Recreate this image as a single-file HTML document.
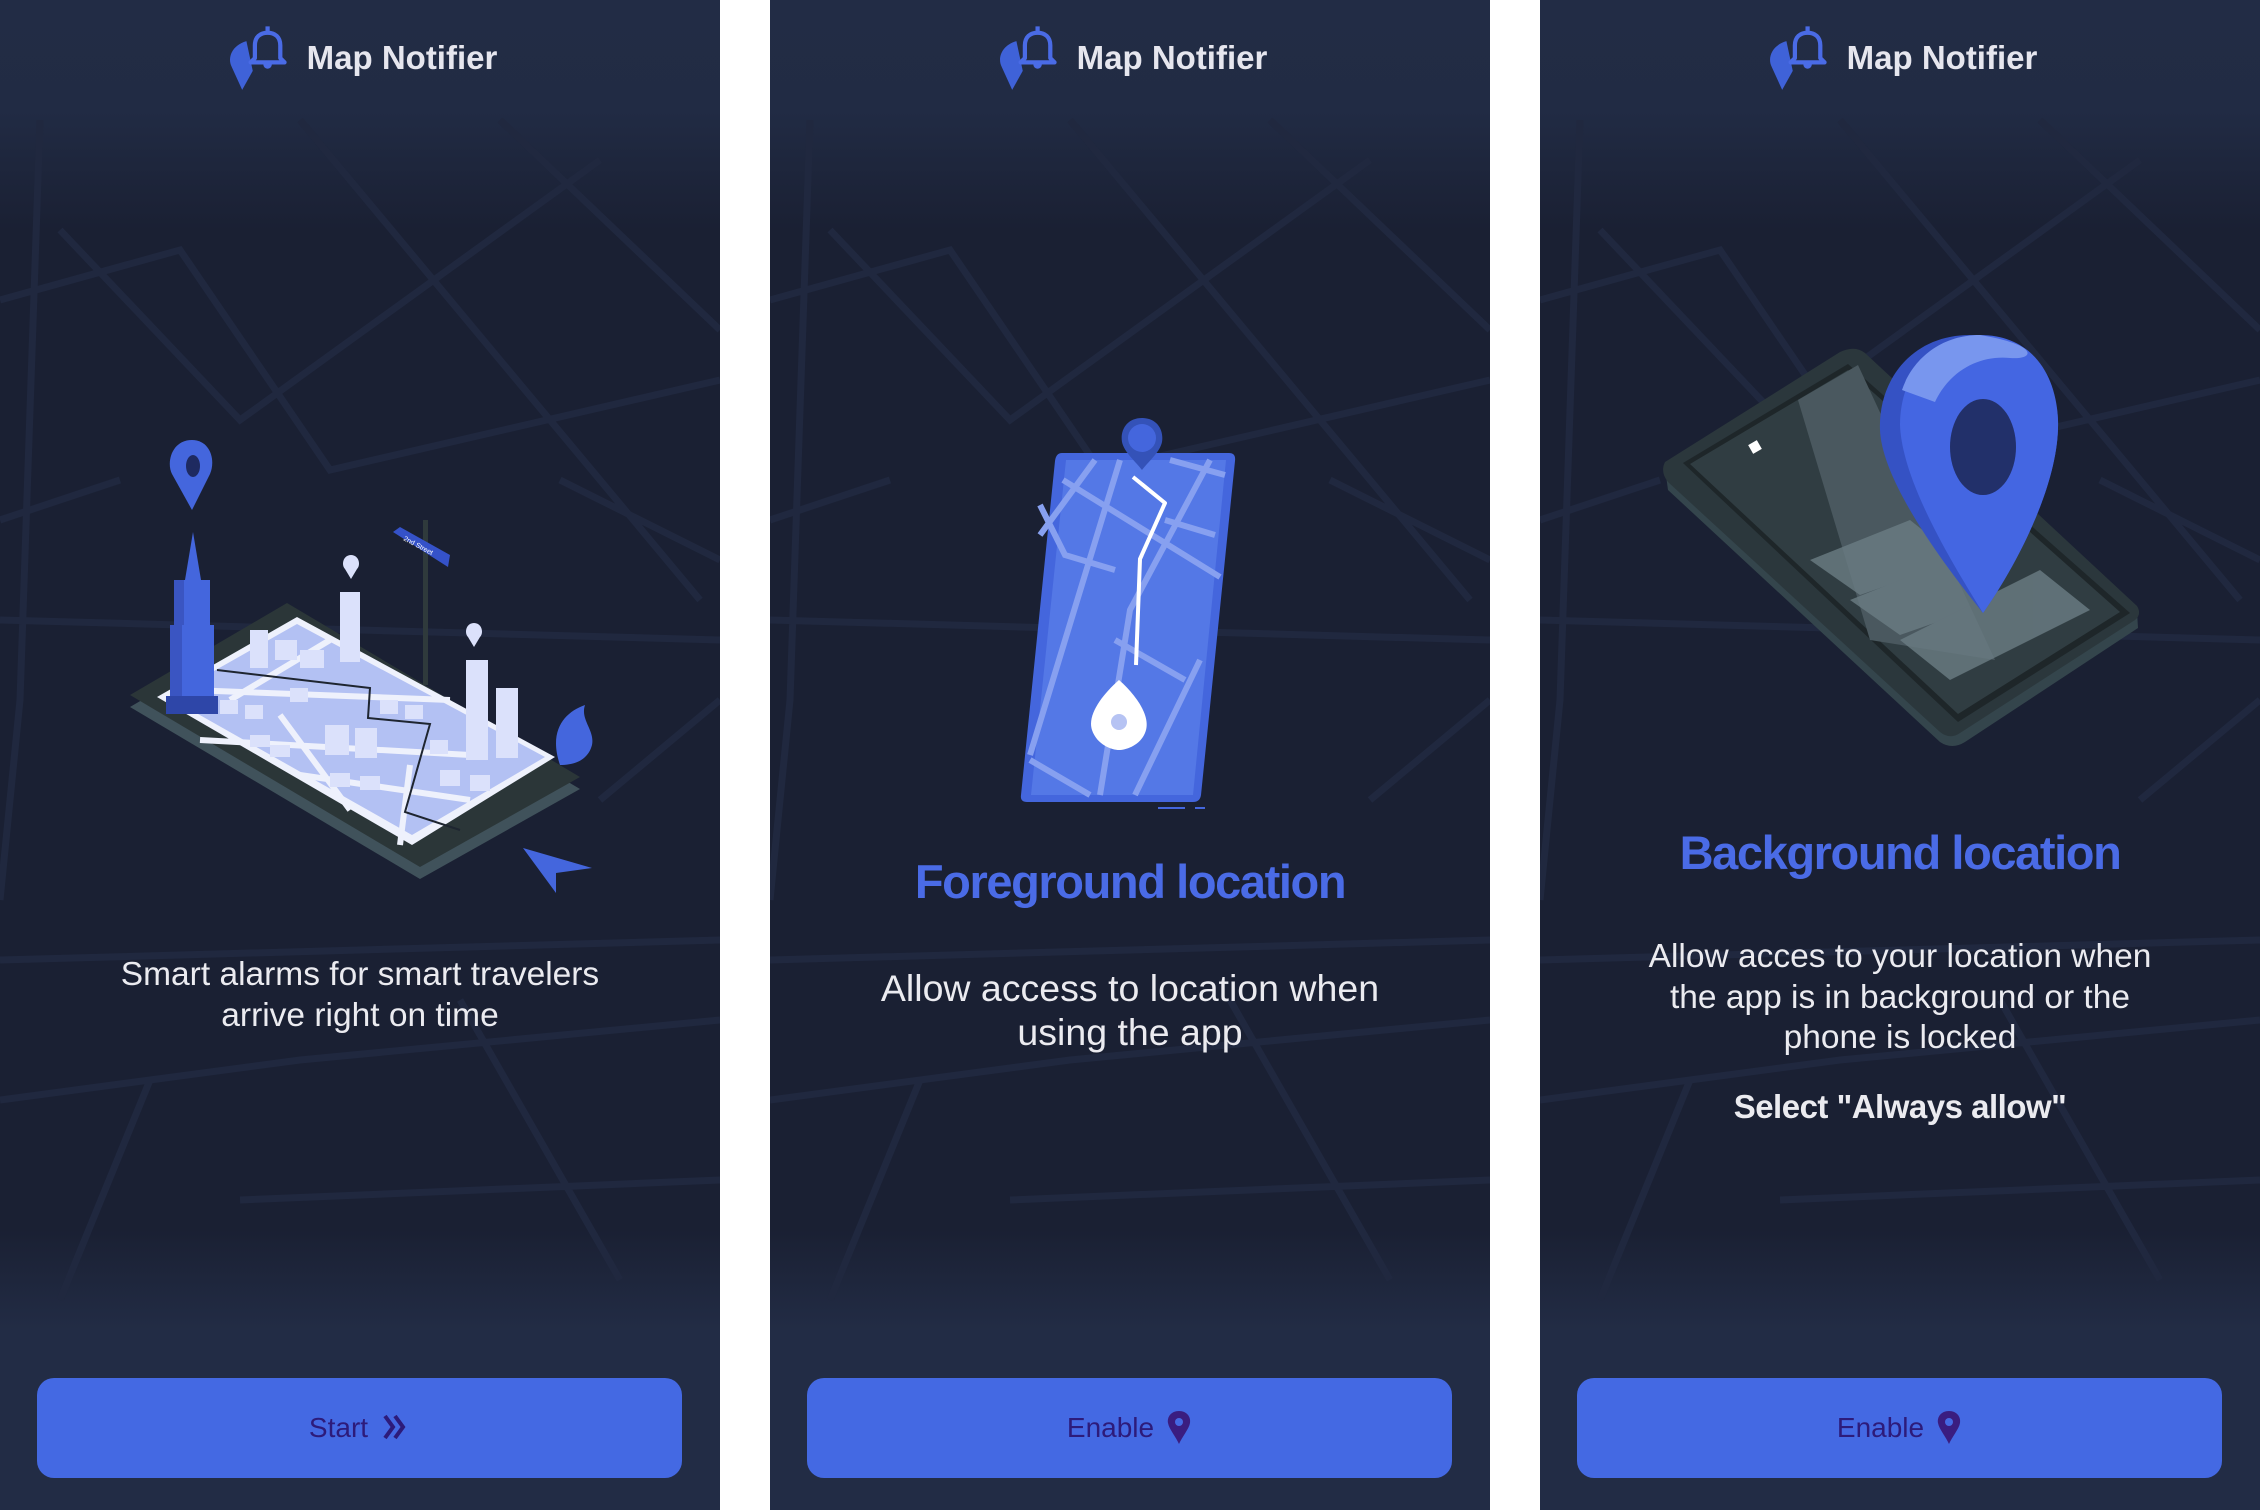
<!DOCTYPE html>
<html><head><meta charset="utf-8"><style>
*{margin:0;padding:0;box-sizing:border-box}
body{width:2260px;height:1510px;background:#fff;position:relative;overflow:hidden;font-family:"Liberation Sans",sans-serif}
.p{position:absolute;top:0;width:720px;height:1510px;overflow:hidden;background:linear-gradient(#222c45 0px,#212b44 110px,#1a2033 230px,#1a2033 1230px,#222c45 1330px,#222c45 1510px)}
.p svg.bg{position:absolute;left:0;top:0}
.hdr{position:absolute;left:0;width:720px;top:34px;height:48px;text-align:center;color:#e6e6ee;font-weight:bold;font-size:33px;line-height:48px}
.t{position:absolute;left:0;width:720px;text-align:center;color:#ebebf0}
.title{color:#4a6be6;font-weight:bold;font-size:47px;letter-spacing:-1.4px}
.btn{position:absolute;left:37px;width:645px;top:1378px;height:100px;border-radius:17px;background:#4469e3;color:#2d1b7a;font-size:28px;line-height:100px;text-align:center}
.btn svg{vertical-align:middle;margin-left:12px;position:relative;top:-3px}
</style></head><body>

<!-- PANEL 1 -->
<div class="p" style="left:0">
<svg class="bg" width="720" height="1510" fill="none" stroke="#20283f" stroke-width="7">
<path d="M60 230 L240 420 L600 160 M0 300 L180 250 L330 470 L720 380 M40 120 L20 700 L0 900 M300 120 L700 600 M500 120 L720 330 M0 960 L720 940 M0 1100 L300 1060 L720 1020 M150 1080 L60 1300 M460 1000 L620 1280 M600 800 L720 700 M0 520 L120 480 M560 480 L720 560 M0 620 L720 640 M240 1200 L720 1180"/>
</svg>
<div class="hdr"><svg width="66" height="72" viewBox="0 0 60 68" style="position:absolute;left:224px;top:-14px"><path d="M20 20 C6 24 2 36 6 44 L16 66 L26 48 Z" fill="#3f62d8"/><path d="M40 6 L40 11 M28 36 L28 24 C28 16 33 12 40 12 C47 12 52 16 52 24 L52 36 L56 40 L24 40 Z" fill="none" stroke="#4a6be6" stroke-width="4" stroke-linejoin="round"/><path d="M36 42 a4 4 0 0 0 8 0z" fill="#4a6be6"/></svg><span style="position:relative;left:42px">Map Notifier</span></div>
<svg class="bg" width="720" height="1510">
<polygon points="130,707 287,615 580,789 420,879" fill="#40525b"/>
<polygon points="130,695 287,603 580,777 420,867" fill="#2b3638"/>
<polygon points="157,697 297,617 555,757 412,845" fill="#eef1fc"/>
<polygon points="168,697 297,624 545,757 412,835" fill="#b3c1f3"/>
<g stroke="#eef1fc" stroke-width="6" fill="none"><path d="M190 690 L450 700 M230 700 L330 640 M200 740 L470 755 M280 715 L350 810 M410 765 L400 845 M300 775 L470 800"/></g>
<path d="M217 670 L370 688 L368 718 L430 724 L405 812 L460 830" stroke="#1e2530" stroke-width="2" fill="none"/>
<g fill="#dbe1fb"><rect x="250" y="630" width="18" height="38"/><rect x="275" y="640" width="22" height="20"/><rect x="300" y="650" width="24" height="18"/><rect x="340" y="592" width="20" height="70"/><rect x="466" y="660" width="22" height="100"/><rect x="496" y="688" width="22" height="70"/><rect x="325" y="725" width="24" height="30"/><rect x="355" y="728" width="22" height="30"/><rect x="220" y="700" width="18" height="14"/><rect x="245" y="705" width="18" height="14"/><rect x="290" y="688" width="18" height="14"/><rect x="380" y="700" width="18" height="14"/><rect x="405" y="705" width="18" height="14"/><rect x="430" y="740" width="18" height="14"/><rect x="440" y="770" width="20" height="16"/><rect x="470" y="775" width="20" height="16"/><rect x="330" y="773" width="20" height="14"/><rect x="360" y="776" width="20" height="14"/><rect x="250" y="735" width="20" height="12"/><rect x="270" y="745" width="20" height="12"/></g>
<rect x="423" y="520" width="5" height="165" fill="#2f3a3c"/>
<polygon points="393,532 400,527 450,555 448,567" fill="#3552c9"/>
<text x="403" y="540" font-size="7" fill="#fff" transform="rotate(28 403 540)">2nd Street</text>
<polygon points="193,532 185,580 201,580" fill="#4466dd"/>
<rect x="176" y="580" width="34" height="50" fill="#4466dd"/><rect x="174" y="580" width="10" height="50" fill="#3a55c2"/>
<rect x="170" y="625" width="44" height="75" fill="#4466dd"/><rect x="170" y="625" width="12" height="75" fill="#3a55c2"/>
<rect x="166" y="696" width="52" height="18" fill="#2e46a8"/>
<path d="M192 440 C172 440 166 462 172 474 L192 510 L210 474 C216 460 210 440 192 440Z" fill="#4466dd"/><ellipse cx="193" cy="466" rx="7" ry="11" fill="#1e2a60"/>
<path d="M351 555 c-8 0 -10 10 -6 14 l6 10 l6 -10 c4 -4 2 -14 -6 -14z" fill="#dbe1fb"/>
<path d="M474 623 c-8 0 -10 10 -6 14 l6 10 l6 -10 c4 -4 2 -14 -6 -14z" fill="#dbe1fb"/>
<path d="M560 765 C548 730 565 712 585 705 C580 720 595 730 592 745 C588 760 575 765 560 765Z" fill="#4466dd"/>
<polygon points="523,848 592,868 556,873 556,893" fill="#4466dd"/>
</svg>
<div class="t" style="top:954px;font-size:33.5px;line-height:41px">Smart alarms for smart travelers<br>arrive right on time</div>
<div class="btn">Start<svg width="30" height="30" viewBox="0 0 30 30"><path d="M5 4 L13 15 L5 26 M15 4 L23 15 L15 26" fill="none" stroke="#2d1b7a" stroke-width="4"/></svg></div>
</div>

<!-- PANEL 2 -->
<div class="p" style="left:770px">
<svg class="bg" width="720" height="1510" fill="none" stroke="#20283f" stroke-width="7">
<path d="M60 230 L240 420 L600 160 M0 300 L180 250 L330 470 L720 380 M40 120 L20 700 L0 900 M300 120 L700 600 M500 120 L720 330 M0 960 L720 940 M0 1100 L300 1060 L720 1020 M150 1080 L60 1300 M460 1000 L620 1280 M600 800 L720 700 M0 520 L120 480 M560 480 L720 560 M0 620 L720 640 M240 1200 L720 1180"/>
</svg>
<div class="hdr"><svg width="66" height="72" viewBox="0 0 60 68" style="position:absolute;left:224px;top:-14px"><path d="M20 20 C6 24 2 36 6 44 L16 66 L26 48 Z" fill="#3f62d8"/><path d="M40 6 L40 11 M28 36 L28 24 C28 16 33 12 40 12 C47 12 52 16 52 24 L52 36 L56 40 L24 40 Z" fill="none" stroke="#4a6be6" stroke-width="4" stroke-linejoin="round"/><path d="M36 42 a4 4 0 0 0 8 0z" fill="#4a6be6"/></svg><span style="position:relative;left:42px">Map Notifier</span></div>
<svg class="bg" width="720" height="1510">
<path d="M292 453 L459 453 Q466 453 465 461 L431 795 Q430 802 423 802 L257 802 Q250 802 251 795 L285 461 Q286 453 292 453Z" fill="#4466dd"/>
<path d="M296 460 L456 460 L423 795 L261 795Z" fill="#5478e6"/>
<g stroke="#87a0f0" stroke-width="6" fill="none"><path d="M293 480 L450 577 M325 460 L270 535 M270 505 L295 555 L345 570 M350 460 L260 755 M440 460 L360 610 L330 795 M400 460 L455 475 M395 520 L445 535 M345 640 L415 680 M430 660 L365 795 M260 760 L320 795"/></g>
<path d="M363 477 L395 503 L370 559 L366 665" stroke="#fff" stroke-width="4" fill="none" stroke-linejoin="round"/>
<path d="M357 680 C340 695 325 715 330 730 C335 745 350 750 357 750 C364 750 380 745 384 730 C388 715 374 695 357 680Z" fill="#fff" transform="translate(-8,0)"/>
<circle cx="349" cy="722" r="8" fill="#b6c3f3"/>
<path d="M372 418 C357 418 350 430 352 442 C354 452 366 462 372 470 C378 462 390 452 392 442 C394 430 387 418 372 418Z" fill="#3452b8"/><circle cx="372" cy="438" r="14" fill="#4466dd"/>
<path d="M388 808 L415 808 M425 808 L435 808" stroke="#4466dd" stroke-width="2"/>
</svg>
<div class="t title" style="top:852px;line-height:60px">Foreground location</div>
<div class="t" style="top:966px;font-size:37.5px;line-height:44px">Allow access to location when<br>using the app</div>
<div class="btn">Enable<svg width="26" height="36" viewBox="0 0 26 36"><path d="M13 2 C5 2 1 8 2 14 C3 20 10 28 13 35 C16 28 23 20 24 14 C25 8 21 2 13 2Z" fill="#3a1d80"/><circle cx="13" cy="13" r="4" fill="#4469e3"/></svg></div>
</div>

<!-- PANEL 3 -->
<div class="p" style="left:1540px">
<svg class="bg" width="720" height="1510" fill="none" stroke="#20283f" stroke-width="7">
<path d="M60 230 L240 420 L600 160 M0 300 L180 250 L330 470 L720 380 M40 120 L20 700 L0 900 M300 120 L700 600 M500 120 L720 330 M0 960 L720 940 M0 1100 L300 1060 L720 1020 M150 1080 L60 1300 M460 1000 L620 1280 M600 800 L720 700 M0 520 L120 480 M560 480 L720 560 M0 620 L720 640 M240 1200 L720 1180"/>
</svg>
<div class="hdr"><svg width="66" height="72" viewBox="0 0 60 68" style="position:absolute;left:224px;top:-14px"><path d="M20 20 C6 24 2 36 6 44 L16 66 L26 48 Z" fill="#3f62d8"/><path d="M40 6 L40 11 M28 36 L28 24 C28 16 33 12 40 12 C47 12 52 16 52 24 L52 36 L56 40 L24 40 Z" fill="none" stroke="#4a6be6" stroke-width="4" stroke-linejoin="round"/><path d="M36 42 a4 4 0 0 0 8 0z" fill="#4a6be6"/></svg><span style="position:relative;left:42px">Map Notifier</span></div>
<svg class="bg" width="720" height="1510">
<path d="M125 468 L300 357 Q315 350 325 358 L597 612 L598 628 L425 742 Q412 750 400 742 L128 490Z" fill="#34454c"/>
<path d="M125 462 L300 352 Q315 345 325 353 L597 606 Q602 614 595 620 L420 733 Q410 740 400 732 L128 482 Q120 472 125 462Z" fill="#2b373c"/>
<polygon points="143,463 308,364 590,613 418,722" fill="#1e2629"/>
<polygon points="150,464 308,370 580,612 418,714" fill="#303d42"/>
<polygon points="258,400 318,365 455,660 330,640" fill="#4a585f"/>
<g fill="#6b7d84" opacity=".8"><polygon points="270,560 370,520 420,560 320,595"/><polygon points="310,600 410,560 460,600 360,635"/><polygon points="360,640 500,570 550,610 410,680"/></g>
<rect x="210" y="442" width="10" height="10" fill="#fff" transform="rotate(-30 215 447)"/>
<path d="M430 335 C372 335 338 380 340 430 C342 480 400 560 443 613 C480 560 520 480 518 420 C516 372 480 335 430 335Z" fill="#3552c4"/>
<path d="M440 335 C392 335 360 375 360 425 C362 480 410 560 443 613 C480 560 520 480 518 420 C516 372 490 335 440 335Z" fill="#4466e2"/>
<path d="M440 335 C400 335 372 360 362 390 L395 402 C410 370 440 355 470 358 C495 360 500 345 440 335Z" fill="#7896ee"/>
<ellipse cx="443" cy="447" rx="33" ry="48" fill="#22306a"/>
</svg>
<div class="t title" style="top:823px;line-height:60px">Background location</div>
<div class="t" style="top:937px;font-size:33.5px;line-height:40.5px">Allow acces to your location when<br>the app is in background or the<br>phone is locked</div>
<div class="t" style="top:1087px;font-size:33px;line-height:40px;font-weight:bold;letter-spacing:-0.5px">Select "Always allow"</div>
<div class="btn">Enable<svg width="26" height="36" viewBox="0 0 26 36"><path d="M13 2 C5 2 1 8 2 14 C3 20 10 28 13 35 C16 28 23 20 24 14 C25 8 21 2 13 2Z" fill="#3a1d80"/><circle cx="13" cy="13" r="4" fill="#4469e3"/></svg></div>
</div>
</body></html>
